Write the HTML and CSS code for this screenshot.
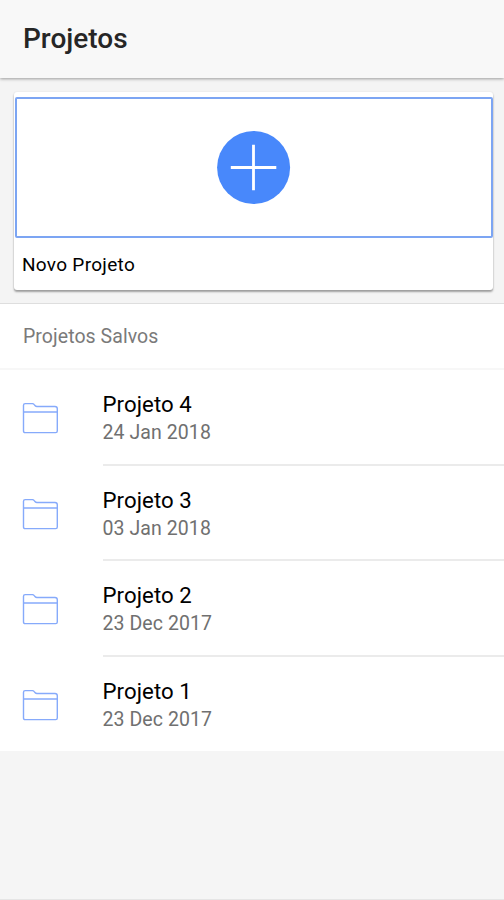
FILE: index.html
```html
<!DOCTYPE html>
<html lang="pt">
<head>
<meta charset="utf-8">
<title>Projetos</title>
<link rel="stylesheet" href="styles.css">
</head>
<body>
<svg class="symbols" width="0" height="0">
  <symbol id="folder" viewBox="0 0 36 32">
    <path d="M1.5 29V3.3Q1.5 1.6 3.2 1.6H10.5Q11.4 1.6 12 2.4L13.2 3.8Q13.8 4.5 15 4.5H33Q35.3 4.5 35.3 6.7V29Q35.3 30.6 33.7 30.6H3.1Q1.5 30.6 1.5 29ZM1.5 10H35.3"/>
  </symbol>
</svg>
<div class="screen">
  <header class="toolbar"><h1 class="title"><span>Projetos</span></h1></header>
  <main>
    <section class="create">
      <div class="card">
        <button class="add" aria-label="Novo Projeto">
          <svg class="plus" viewBox="0 0 74 74"><circle cx="36.6" cy="36.5" r="36.5"/><path d="M36.5 13.7V59.3M13.8 36.5H59.3"/></svg>
        </button>
        <div class="caption"><span>Novo Projeto</span></div>
      </div>
    </section>
    <h2 class="list-header"><span>Projetos Salvos</span></h2>
    <ul class="list">
      <li class="item"><svg class="folder"><use href="#folder"/></svg><div class="label"><h3><span>Projeto 4</span></h3><p><span>24 Jan 2018</span></p></div></li>
      <li class="item"><svg class="folder"><use href="#folder"/></svg><div class="label"><h3><span>Projeto 3</span></h3><p><span>03 Jan 2018</span></p></div></li>
      <li class="item"><svg class="folder"><use href="#folder"/></svg><div class="label"><h3><span>Projeto 2</span></h3><p><span>23 Dec 2017</span></p></div></li>
      <li class="item"><svg class="folder"><use href="#folder"/></svg><div class="label"><h3><span>Projeto 1</span></h3><p><span>23 Dec 2017</span></p></div></li>
    </ul>
  </main>
</div>
</body>
</html>
```
FILE: styles.css
```css
* { box-sizing: border-box; margin: 0; padding: 0; }
body { font-family: Roboto, "Liberation Sans", sans-serif; background: #f5f5f5; color: #000; }
.symbols { display: block; }
.screen { height: 900px; overflow: hidden; border-bottom: 1px solid #e5e5e5; }
.toolbar {
  position: relative;
  height: 78px;
  padding: 22px 23px 0;
  background: #f8f8f8;
  box-shadow: 0 1px 3px rgba(0, 0, 0, .36);
}
.title { font-size: 28px; line-height: 34px; font-weight: 500; color: #262626; }
.create { height: 226px; padding: 14px 11px 0 14px; border-bottom: 1px solid #dedede; background: #f4f4f4; }
.card {
  height: 198px;
  padding-top: 5px;
  border-radius: 3px;
  background: #fff;
  box-shadow: 0 2px 2px rgba(0, 0, 0, .34), 0 0 2px rgba(0, 0, 0, .1);
}
.add {
  display: flex;
  align-items: center;
  justify-content: center;
  width: 478px;
  height: 141px;
  margin-left: 1px;
  border: 2px solid #7ca5f3;
  border-radius: 2px;
  background: #fff;
}
.plus { width: 74px; height: 74px; }
.plus circle { fill: #4888fb; }
.plus path { fill: none; stroke: #fff; stroke-width: 2.8; }
.caption { padding: 15px 8px 0; font-size: 19px; line-height: 24px; letter-spacing: .3px; }
.list-header {
  height: 66px;
  padding: 20px 23px 0;
  border-bottom: 2px solid #f7f7f7;
  background: #fff;
  color: #7a7a7a;
  font-size: 19.5px;
  line-height: 26px;
  font-weight: 400;
  letter-spacing: .06px;
}
.list { list-style: none; height: 381px; background: #fff; }
.item { display: flex; height: 95.5px; padding-left: 22px; }
.folder {
  width: 36px;
  height: 32px;
  margin: 32px 44.5px 0 0;
  fill: none;
  stroke: #86aafb;
  stroke-width: 1.4;
}
.label { flex: 1; padding-top: 20px; border-bottom: 2px solid #ebebeb; }
.item:last-child .label { border-bottom: 0; }
.label h3 { font-size: 22.2px; line-height: 28px; font-weight: 400; letter-spacing: .08px; }
.label p { margin-top: 1px; font-size: 19.5px; line-height: 27px; letter-spacing: .08px; color: #707070; }
```
